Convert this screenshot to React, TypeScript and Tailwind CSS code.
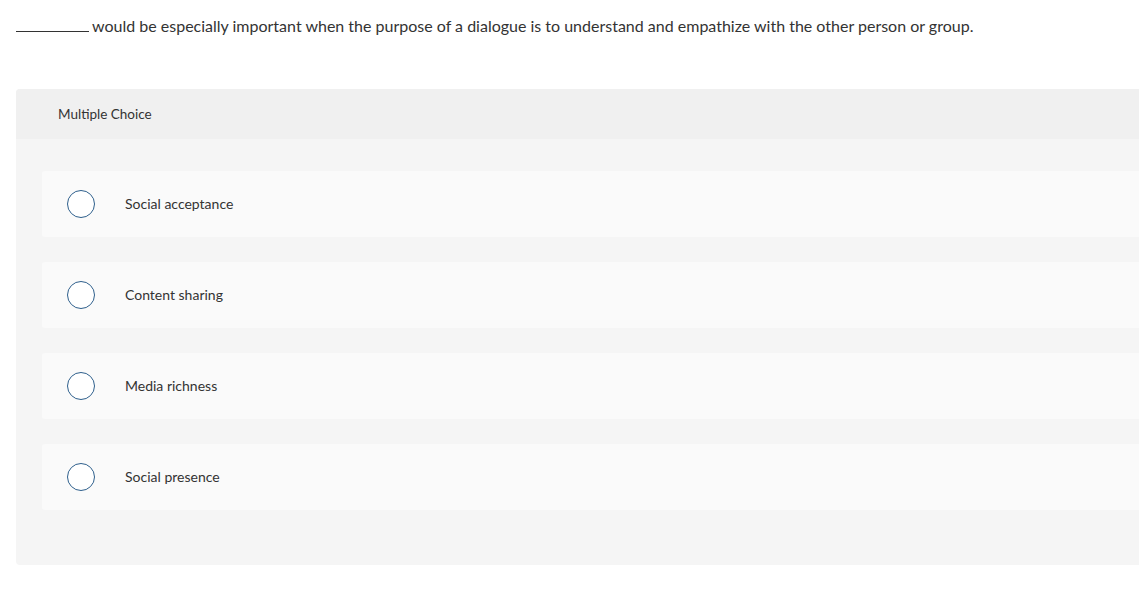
const options = ['Social acceptance', 'Content sharing', 'Media richness', 'Social presence'];

export default function App() {
  return (
    <div className="min-h-[597px] bg-white overflow-hidden" style={{ fontFamily: 'Lato, "Open Sans", sans-serif' }}>
      <p className="pl-4 pt-[16px] text-[16px] leading-[20px] text-[#333]">
        <span className="inline-block w-[73px] border-b border-[#333] align-baseline mr-[3px]"></span>
        would be especially important when the purpose of a dialogue is to understand and empathize with the other person or group.
      </p>

      <div className="ml-4 mt-[53px] rounded-l-[4px] bg-[#f5f5f5]">
        <div className="h-[50px] flex items-center pl-[42px] bg-[#f0f0f0] rounded-tl-[4px] text-[13.5px] text-[#333]">
          Multiple Choice
        </div>
        <div className="pl-[26px] pt-[32px] pb-[55px] flex flex-col gap-[25px]">
          {options.map((o) => (
            <div key={o} className="h-[66px] flex items-center bg-[#fafafa] rounded-l-[3px] pl-[25px]">
              <span className="w-[28px] h-[28px] rounded-full border-[1.5px] border-[#2e5f8c] bg-white shrink-0"></span>
              <span className="ml-[30px] mb-[2px] text-[14px] text-[#333]">{o}</span>
            </div>
          ))}
        </div>
      </div>
    </div>
  );
}
